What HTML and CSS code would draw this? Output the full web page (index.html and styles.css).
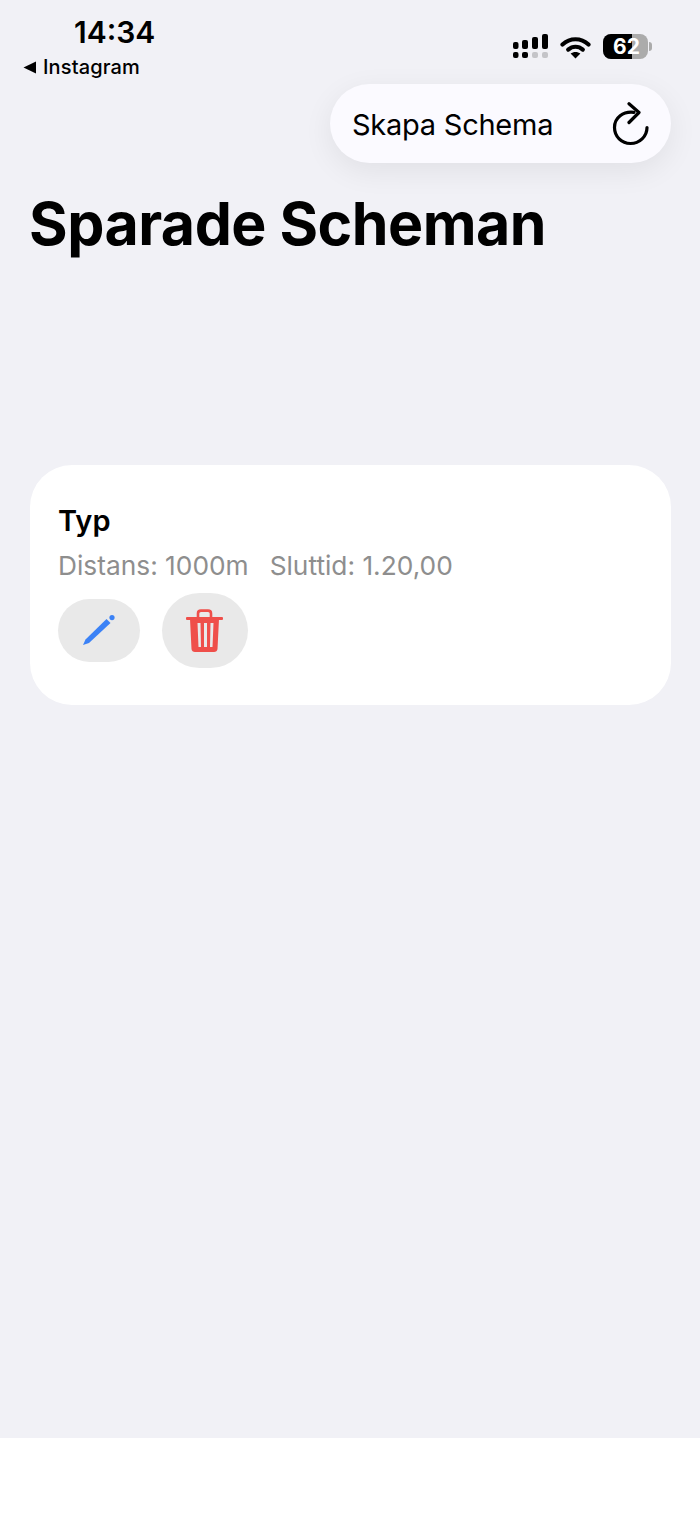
FILE: index.html
```html
<!DOCTYPE html>
<html lang="sv">
<head>
    <meta charset="UTF-8">
    <meta name="viewport" content="width=device-width, initial-scale=1.0">
    <title>Sparade Scheman</title>
    <link rel="stylesheet" href="styles.css">
</head>
<body>
    <div class="screen">
        <div class="status-bar">
            <div class="status-left">
                <div class="time">14:34</div>
                <div class="back-link">
                    <svg class="back-arrow" width="14" height="13" viewBox="0 0 14 13"><path d="M0.5 6.5 L13 0.6 V12.4 Z" fill="#000"/></svg>
                    <span>Instagram</span>
                </div>
            </div>
            <div class="status-right">
                <svg class="signal" width="36" height="26" viewBox="0 0 36 26">
                    <rect x="0" y="9" width="5.5" height="7" rx="2" fill="#000"/>
                    <rect x="9" y="7" width="6" height="9" rx="2" fill="#000"/>
                    <rect x="19" y="4" width="6" height="12" rx="2" fill="#000"/>
                    <rect x="29" y="1" width="6" height="15" rx="2" fill="#000"/>
                    <rect x="0" y="19" width="5.5" height="6" rx="2" fill="#000"/>
                    <rect x="9" y="19" width="6" height="6" rx="2" fill="#000"/>
                    <rect x="19" y="19" width="6" height="6" rx="2" fill="#c4c4c8"/>
                    <rect x="29" y="19" width="6" height="6" rx="2" fill="#c4c4c8"/>
                </svg>
                <svg class="wifi" width="31" height="23" viewBox="0 0 31 23">
                    <path d="M2.5 8.5 C10 1.5 21 1.5 28.5 8.5" fill="none" stroke="#000" stroke-width="4.2" stroke-linecap="round"/>
                    <path d="M8.2 13.6 C12.5 9.8 18.5 9.8 22.8 13.6" fill="none" stroke="#000" stroke-width="4.2" stroke-linecap="round"/>
                    <path d="M15.5 22.5 L10.6 17.6 C13.4 15.4 17.6 15.4 20.4 17.6 Z" fill="#000"/>
                </svg>
                <div class="battery">
                    <div class="battery-body">
                        <div class="battery-fill"></div>
                        <span class="battery-level">62</span>
                    </div>
                    <div class="battery-tip"></div>
                </div>
            </div>
        </div>

        <div class="actions">
            <button class="create-btn">
                <span class="create-label">Skapa Schema</span>
                <svg width="38" height="44" viewBox="0 0 38 44" fill="none" stroke="#000" stroke-width="3.2" stroke-linecap="round" stroke-linejoin="round">
                    <path d="M22 10.4 C11 9 2.5 16 2.5 25.5 C2.5 34.5 9.5 41.5 18.5 41.5 C27.5 41.5 35 34.5 35 25.5"/>
                    <path d="M17 1.8 L27 10.5 L17 20.5"/>
                </svg>
            </button>
        </div>

        <h1 class="title">Sparade Scheman</h1>

        <div class="card">
            <div class="card-title">Typ</div>
            <div class="card-meta">
                <span>Distans: 1000m</span>
                <span>Sluttid: 1.20,00</span>
            </div>
            <div class="card-buttons">
                <button class="icon-btn edit-btn">
                    <svg width="34" height="34" viewBox="0 0 34 34" fill="#3b82f6">
                        <path d="M1 31 L3.5 25.5 L24.5 5 L28.5 9 L7 29 Z"/>
                        <circle cx="30" cy="3.6" r="2.6"/>
                    </svg>
                </button>
                <button class="icon-btn trash-btn">
                    <svg width="38" height="44" viewBox="0 0 38 44">
                        <path d="M12 9 V4.5 C12 2.5 13.2 1.6 15 1.6 H22 C23.8 1.6 25 2.5 25 4.5 V9" fill="none" stroke="#ef4f4a" stroke-width="2.6"/>
                        <rect x="0" y="8" width="37" height="3" rx="1" fill="#ef4f4a"/>
                        <path fill-rule="evenodd" d="M4 10 H33 L31.5 40 C31.3 42 30 43 28 43 H9 C7 43 5.7 42 5.5 40 Z M11.5 14 L12.5 38 H15 L14.5 14 Z M18 14 V38 H21 V14 Z M24.5 14 L24 38 H26.5 L27.5 14 Z" fill="#ef4f4a"/>
                    </svg>
                </button>
            </div>
        </div>
    </div>
    <div class="bottom-area"></div>
</body>
</html>
```

FILE: styles.css
```css
* {
    margin: 0;
    padding: 0;
    box-sizing: border-box;
}

body {
    font-family: Inter, 'Noto Sans', sans-serif;
    background: white;
    color: #000;
    height: 100vh;
    display: flex;
    flex-direction: column;
}

.screen {
    flex: 1;
    background: #f1f1f6;
    padding: 0 29px 0 30px;
}

.bottom-area {
    height: 76px;
    background: white;
}

.status-bar {
    height: 84px;
    margin: 0 -29px 0 -30px;
    padding: 14px 48px 0 23px;
    display: flex;
    justify-content: space-between;
}

.time {
    font-size: 30px;
    font-weight: 600;
    line-height: 36px;
    margin-left: 51px;
}

.back-link {
    display: flex;
    align-items: center;
    gap: 6px;
    font-size: 20px;
    font-weight: 500;
    letter-spacing: 0.15px;
    line-height: 24px;
    margin-top: 5px;
}

.status-right {
    display: flex;
    align-items: flex-start;
    padding-top: 19px;
    gap: 12px;
}

.wifi {
    margin: 3px 0 0 -1px;
}

.battery {
    display: flex;
    align-items: center;
    margin-top: 1px;
}

.battery-body {
    position: relative;
    width: 45px;
    height: 25px;
    border-radius: 8px;
    background: #ababab;
    overflow: hidden;
}

.battery-fill {
    width: 29px;
    height: 100%;
    background: #000;
}

.battery-level {
    position: absolute;
    top: 0;
    left: 10px;
    font-size: 21px;
    font-weight: 700;
    line-height: 25px;
    color: white;
}

.battery-tip {
    width: 3px;
    height: 9px;
    margin-left: 1px;
    border-radius: 0 3px 3px 0;
    background: #ababab;
}

.actions {
    display: flex;
    justify-content: flex-end;
}

.create-btn {
    width: 341px;
    height: 79px;
    padding: 0 21px 0 22px;
    display: flex;
    align-items: center;
    justify-content: space-between;
    border: none;
    border-radius: 40px;
    background: #fbfaff;
    color: #000;
    font-family: inherit;
    font-size: 29px;
    letter-spacing: -0.25px;
    box-shadow: 0 8px 30px rgba(0,0,0,0.07);
}

.create-label {
    padding-top: 2px;
}

.title {
    font-size: 59px;
    font-weight: 700;
    line-height: 72px;
    letter-spacing: -0.5px;
    margin: 25px 0 0 -1px;
}

.card {
    margin-top: 205px;
    height: 240px;
    padding: 38px 28px 0;
    background: white;
    border-radius: 42px;
}

.card-title {
    font-size: 29px;
    font-weight: 600;
    line-height: 36px;
}

.card-meta {
    display: flex;
    gap: 21px;
    margin-top: 11px;
    color: #8e8e8e;
    font-size: 26.3px;
    line-height: 32px;
}

.card-buttons {
    display: flex;
    align-items: center;
    gap: 22px;
    margin-top: 11px;
}

.icon-btn {
    display: flex;
    align-items: center;
    justify-content: center;
    border: none;
    background: #e9e9e9;
}

.edit-btn {
    width: 82px;
    height: 63px;
    border-radius: 32px;
}

.trash-btn {
    width: 86px;
    height: 75px;
    border-radius: 38px;
}
```
